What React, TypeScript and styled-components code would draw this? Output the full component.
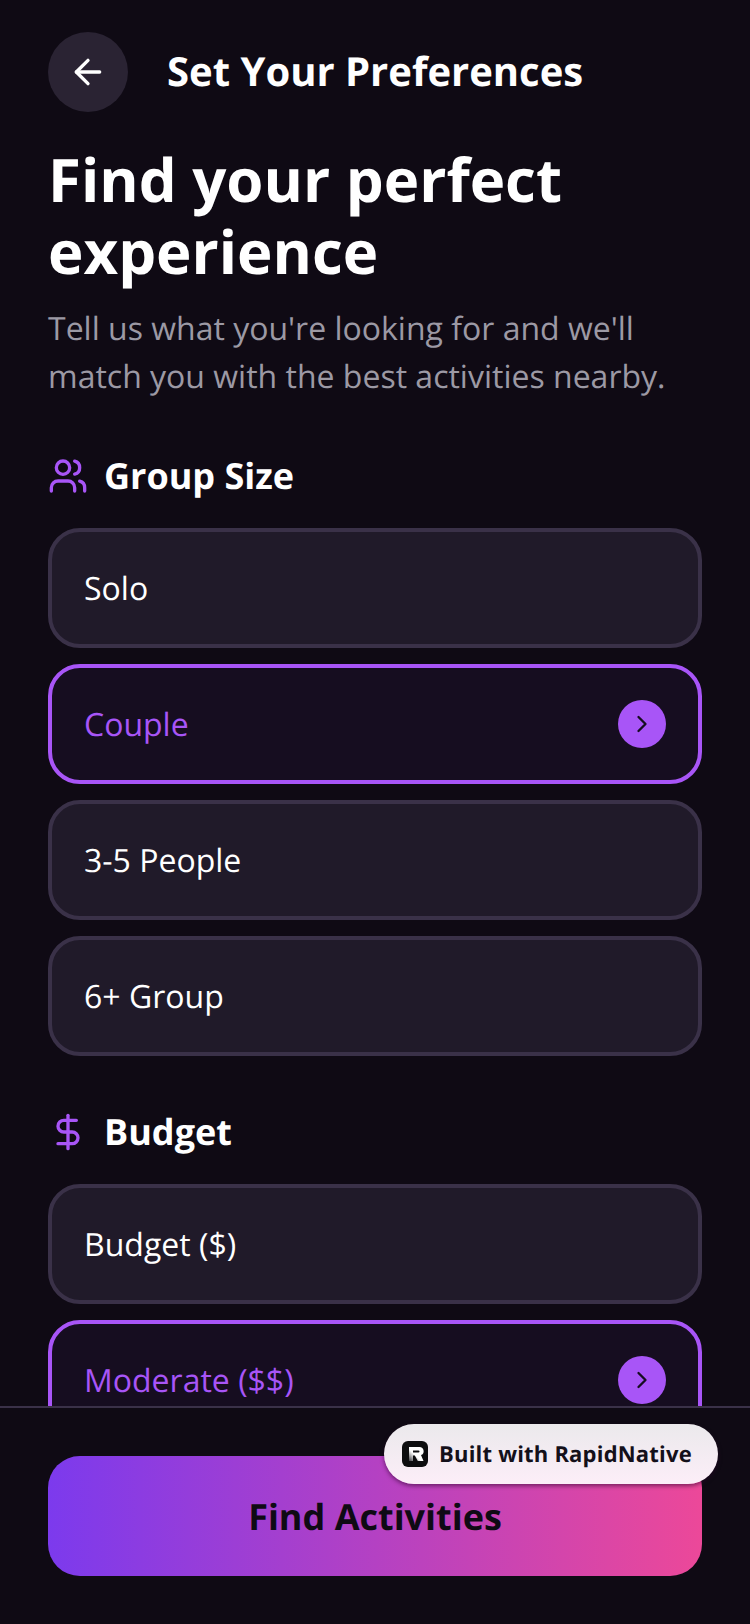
import React from 'react';
import styled, { createGlobalStyle } from 'styled-components';
import { ArrowLeft, ChevronRight, DollarSign, Users } from 'lucide-react';

const GlobalStyle = createGlobalStyle`
  html, body {
    margin: 0;
    padding: 0;
    background: #0f0a14;
  }
  * {
    box-sizing: border-box;
  }
`;

const Screen = styled.div`
  position: relative;
  display: flex;
  flex-direction: column;
  width: 750px;
  height: 1624px;
  overflow: hidden;
  background: #0f0a14;
  color: #ffffff;
  font-family: 'Open Sans', sans-serif;
  text-rendering: geometricPrecision;
`;

const Content = styled.div`
  flex: 1;
  min-height: 0;
  overflow: hidden;
  padding: 32px 48px 0;
`;

const Header = styled.div`
  display: flex;
  align-items: center;
  gap: 39px;
`;

const BackButton = styled.div`
  display: flex;
  align-items: center;
  justify-content: center;
  width: 80px;
  height: 80px;
  border-radius: 50%;
  background: #2a2333;
`;

const ScreenTitle = styled.div`
  padding-bottom: 2px;
  font-size: 40px;
  line-height: 56px;
  font-weight: 700;
`;

const Headline = styled.h1`
  margin: 31px 0 0;
  font-size: 60px;
  line-height: 72px;
  font-weight: 700;
`;

const Lead = styled.p`
  margin: 18px 0 0;
  font-size: 32px;
  line-height: 48px;
  color: #9c99a4;
`;

const SectionHead = styled.div<{ $top: number }>`
  display: flex;
  align-items: center;
  gap: 16px;
  margin-top: ${(p) => p.$top}px;
  height: 56px;
`;

const IconSlot = styled.div`
  display: flex;
  align-items: center;
  justify-content: center;
  width: 40px;
  color: #a855f7;
`;

const SectionTitle = styled.div`
  font-size: 36px;
  line-height: 56px;
  font-weight: 700;
`;

const OptionList = styled.div`
  display: flex;
  flex-direction: column;
  gap: 16px;
  margin-top: 24px;
`;

const Option = styled.div<{ $selected?: boolean }>`
  display: flex;
  align-items: center;
  justify-content: space-between;
  flex-shrink: 0;
  height: 120px;
  padding: 0 32px;
  border: 4px solid ${(p) => (p.$selected ? '#a855f7' : '#3a3148')};
  border-radius: 32px;
  background: ${(p) => (p.$selected ? '#160d20' : '#201a29')};
`;

const OptionLabel = styled.span<{ $selected?: boolean }>`
  padding-top: 2px;
  font-size: 32px;
  line-height: 48px;
  color: ${(p) => (p.$selected ? '#a855f7' : '#ffffff')};
`;

const Check = styled.div`
  display: flex;
  align-items: center;
  justify-content: center;
  width: 48px;
  height: 48px;
  border-radius: 50%;
  background: #a855f7;
  color: #160d20;
`;

const Footer = styled.div`
  flex-shrink: 0;
  padding: 48px;
  border-top: 2px solid #3a3148;
  background: #0f0a14;
`;

const FindButton = styled.div`
  display: flex;
  align-items: center;
  justify-content: center;
  height: 120px;
  border-radius: 32px;
  background: linear-gradient(90deg, #7c3aed, #ec4899);
  color: #0f0a14;
  font-size: 36px;
  font-weight: 700;
`;

const Badge = styled.div`
  position: absolute;
  left: 384px;
  top: 1424px;
  display: flex;
  align-items: center;
  gap: 11px;
  width: 334px;
  height: 60px;
  padding-left: 18px;
  border-radius: 30px;
  background: linear-gradient(180deg, #ebe9ec, #fceef8);
  box-shadow: 0 2px 4px rgba(40, 0, 40, 0.55);
  color: #14101a;
  font-size: 22px;
  font-weight: 700;
  letter-spacing: 0.2px;
  white-space: nowrap;
`;

const options = {
  group: [
    { label: 'Solo' },
    { label: 'Couple', selected: true },
    { label: '3-5 People' },
    { label: '6+ Group' },
  ],
  budget: [{ label: 'Budget ($)' }, { label: 'Moderate ($$)', selected: true }],
};

const Options = ({ items }: { items: { label: string; selected?: boolean }[] }) => (
  <OptionList>
    {items.map((item) => (
      <Option key={item.label} $selected={item.selected}>
        <OptionLabel $selected={item.selected}>{item.label}</OptionLabel>
        {item.selected && (
          <Check>
            <ChevronRight size={28} strokeWidth={2} />
          </Check>
        )}
      </Option>
    ))}
  </OptionList>
);

const RapidLogo = () => (
  <svg width="26" height="26" viewBox="0 0 26 26">
    <defs>
      <linearGradient id="rapidFade" x1="0" x2="0.7" y1="1" y2="0.3">
        <stop offset="0" stopColor="#3c3c40" />
        <stop offset="0.6" stopColor="#ffffff" />
      </linearGradient>
    </defs>
    <rect width="26" height="26" rx="6" fill="#0d0d0f" />
    <path
      fillRule="evenodd"
      d="M7 6h10.5a4.2 4.2 0 0 1 1.5 8.1L21.5 20H15.8l-3-5.5H11V20H7zM11 9.5v2h5.5a1 1 0 0 0 0-2z"
      fill="url(#rapidFade)"
    />
  </svg>
);

export default function App() {
  return (
    <Screen>
      <GlobalStyle />
      <Content>
        <Header>
          <BackButton>
            <ArrowLeft size={40} color="#ffffff" strokeWidth={2} />
          </BackButton>
          <ScreenTitle>Set Your Preferences</ScreenTitle>
        </Header>
        <Headline>
          Find your perfect
          <br />
          experience
        </Headline>
        <Lead>
          Tell us what you're looking for and we'll
          <br />
          match you with the best activities nearby.
        </Lead>
        <SectionHead $top={47}>
          <IconSlot>
            <Users size={40} strokeWidth={2} />
          </IconSlot>
          <SectionTitle>Group Size</SectionTitle>
        </SectionHead>
        <Options items={options.group} />
        <SectionHead $top={48}>
          <IconSlot>
            <DollarSign size={40} strokeWidth={2} />
          </IconSlot>
          <SectionTitle>Budget</SectionTitle>
        </SectionHead>
        <Options items={options.budget} />
      </Content>
      <Footer>
        <FindButton>Find Activities</FindButton>
      </Footer>
      <Badge>
        <RapidLogo />
        Built with RapidNative
      </Badge>
    </Screen>
  );
}
